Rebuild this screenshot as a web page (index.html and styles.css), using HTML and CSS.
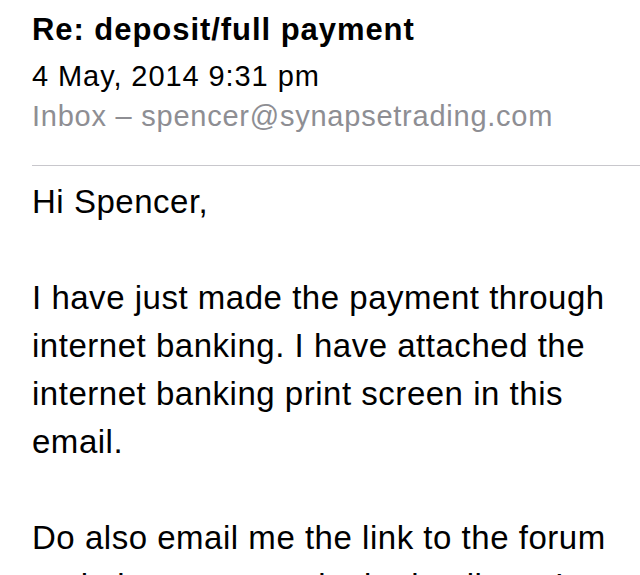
FILE: index.html
```html
<!DOCTYPE html>
<html lang="en">
<head>
<meta charset="utf-8">
<title>Re: deposit/full payment</title>
<link rel="stylesheet" href="styles.css">
</head>
<body>
<main class="message">
  <header class="header">
    <h1 class="subject">Re: deposit/full payment</h1>
    <div class="date">4 May, 2014 9:31 pm</div>
    <div class="mailbox">Inbox – spencer@synapsetrading.com</div>
  </header>
  <article class="body">
    <p>Hi Spencer,</p>
    <p>I have just made the payment through internet banking. I have attached the internet banking print screen in this email.</p>
    <p>Do also email me the link to the forum and also your own login details so I can join.</p>
  </article>
</main>
</body>
</html>
```
FILE: styles.css
```css
html, body {
  margin: 0;
  padding: 0;
  background: #ffffff;
}

body {
  font-family: "Liberation Sans", Arial, sans-serif;
  color: #000000;
  overflow: hidden;
}

.message {
  padding-left: 32px;
}

.header {
  padding-top: 10px;
  padding-bottom: 29px;
  border-bottom: 1px solid #c8c7cc;
}

.subject {
  margin: 0 0 6px 0;
  font-size: 31px;
  line-height: 40px;
  font-weight: bold;
  letter-spacing: 0.95px;
}

.date {
  font-size: 29px;
  line-height: 40px;
  letter-spacing: 0.92px;
}

.mailbox {
  font-size: 29px;
  line-height: 40px;
  letter-spacing: 0.76px;
  color: #8e8e93;
}

.body {
  padding-top: 12px;
  font-size: 33px;
  line-height: 48px;
  letter-spacing: 0.52px;
}

.body p {
  margin: 0 0 48px 0;
}
```
